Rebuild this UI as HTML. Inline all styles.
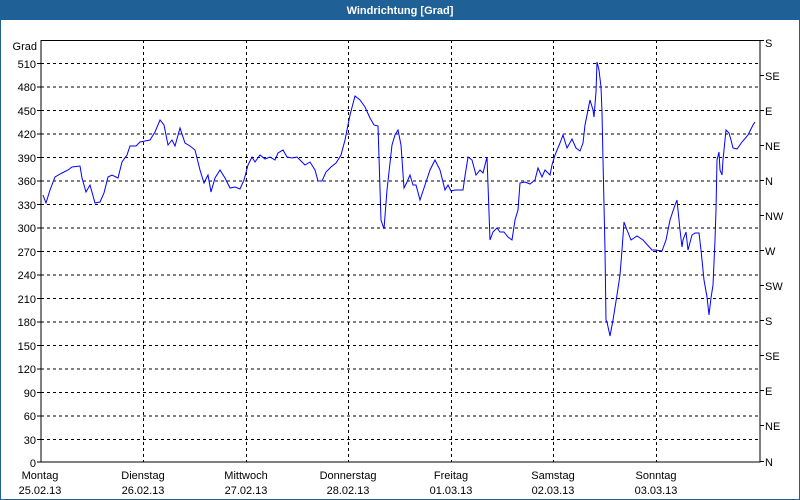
<!DOCTYPE html>
<html><head><meta charset="utf-8"><style>
html,body{margin:0;padding:0;width:800px;height:500px;overflow:hidden;background:#fff}
</style></head><body>
<svg width="800" height="500" xmlns="http://www.w3.org/2000/svg" font-family="'Liberation Sans', sans-serif" font-size="11">
<rect x="0" y="0" width="800" height="500" fill="#fff"/>
<rect x="0.5" y="0.5" width="799" height="499" fill="none" stroke="#1f6096"/>
<rect x="0" y="0" width="800" height="20" fill="#1f6096"/>
<text x="400" y="14" fill="#fff" font-weight="bold" text-anchor="middle">Windrichtung [Grad]</text>
<g stroke="#000" stroke-dasharray="3,3" fill="none">
<path d="M41 63.5H760M41 87H760M41 110.5H760M41 134H760M41 157.5H760M41 181H760M41 204.5H760M41 228H760M41 251.5H760M41 275H760M41 298.5H760M41 322H760M41 345.5H760M41 369H760M41 392.5H760M41 416H760M41 439.5H760"/>
<path d="M143.5 40V462M246.5 40V462M348.5 40V462M451.5 40V462M553.5 40V462M656.5 40V462"/>
</g>
<rect x="41" y="40.5" width="719" height="421.5" fill="none" stroke="#000"/>
<g stroke="#000">
<path d="M760 40.5h4M760 75.5h4M760 110.5h4M760 145.5h4M760 180.5h4M760 215.5h4M760 250.5h4M760 285.5h4M760 320.5h4M760 355.5h4M760 390.5h4M760 425.5h4M760 461.5h4"/>
<path d="M37 63.5h4M37 87h4M37 110.5h4M37 134h4M37 157.5h4M37 181h4M37 204.5h4M37 228h4M37 251.5h4M37 275h4M37 298.5h4M37 322h4M37 345.5h4M37 369h4M37 392.5h4M37 416h4M37 439.5h4M37 462h4"/>
</g>
<g text-anchor="end" fill="#000">
<text x="37" y="50">Grad</text>
<text x="36" y="68">510</text><text x="36" y="91">480</text><text x="36" y="115">450</text><text x="36" y="138">420</text><text x="36" y="162">390</text><text x="36" y="185">360</text><text x="36" y="209">330</text><text x="36" y="232">300</text><text x="36" y="256">270</text><text x="36" y="279">240</text><text x="36" y="303">210</text><text x="36" y="326">180</text><text x="36" y="350">150</text><text x="36" y="373">120</text><text x="36" y="397">90</text><text x="36" y="420">60</text><text x="36" y="444">30</text><text x="36" y="467">0</text>
</g>
<g fill="#000">
<text x="765" y="47">S</text><text x="765" y="80">SE</text><text x="765" y="115">E</text><text x="765" y="150">NE</text><text x="765" y="185">N</text><text x="765" y="220">NW</text><text x="765" y="255">W</text><text x="765" y="290">SW</text><text x="765" y="325">S</text><text x="765" y="360">SE</text><text x="765" y="395">E</text><text x="765" y="430">NE</text><text x="765" y="466">N</text>
</g>
<g text-anchor="middle" fill="#000">
<text x="40" y="479">Montag</text><text x="40" y="494">25.02.13</text>
<text x="143" y="479">Dienstag</text><text x="143" y="494">26.02.13</text>
<text x="246" y="479">Mittwoch</text><text x="246" y="494">27.02.13</text>
<text x="348" y="479">Donnerstag</text><text x="348" y="494">28.02.13</text>
<text x="451" y="479">Freitag</text><text x="451" y="494">01.03.13</text>
<text x="553" y="479">Samstag</text><text x="553" y="494">02.03.13</text>
<text x="656" y="479">Sonntag</text><text x="656" y="494">03.03.13</text>
</g>
<polyline fill="none" stroke="#0000ff" stroke-width="1" points="43,195 46,203 50,190 55,177 62,173 68,170 72,167 80,166 82,178 86,192 90,185 95,203 100,202 104,193 108,177 112,175 118,178 122,162 127,155 130,146 136,146 140,142 145,141 150,140 155,132 160,120 164,125 168,145 172,140 175,146 180,128 185,143 190,146 195,150 200,170 204,183 208,175 211,192 215,178 220,170 225,178 230,188 235,187 240,189 244,180 248,165 252,157 255,162 260,155 265,159 270,157 275,160 278,153 283,150 287,157 292,158 297,157 300,160 305,165 310,162 315,170 318,181 322,181 326,172 331,167 336,163 341,155 345,140 350,115 355,96 360,100 365,107 370,118 374,125 378,126 381,220 384,229 387,190 392,145 395,135 398,130 401,145 404,188 407,182 410,175 413,185 416,185 420,200 425,185 430,170 435,160 440,170 445,190 448,185 451,191 455,190 460,190 463,190 465,176 468,157 472,160 476,175 480,170 483,173 487,157 490,240 493,232 497,228 500,232 504,232 508,237 512,240 515,220 518,210 520,183 525,182 530,184 535,180 538,168 542,177 545,170 550,175 552,165 555,155 560,143 563,135 567,148 572,139 576,148 580,151 583,143 585,125 588,110 590,100 593,110 594,117 596,92 597,62 599,70 601,87 602,112 603,160 605,250 606,320 607,322 610,336 613,320 617,295 620,275 622,250 624,222 627,230 631,240 637,236 643,240 652,250 656,250 662,251 666,240 670,220 675,205 677,200 680,230 682,247 683,240 686,232 688,250 692,235 695,233 699,233 701,250 704,280 707,297 709,315 711,298 713,285 715,240 716,210 717,160 719,152 720,170 722,175 723,160 726,130 729,133 731,140 733,148 737,149 742,142 748,135 753,125 755,122"/>
</svg>
</body></html>
